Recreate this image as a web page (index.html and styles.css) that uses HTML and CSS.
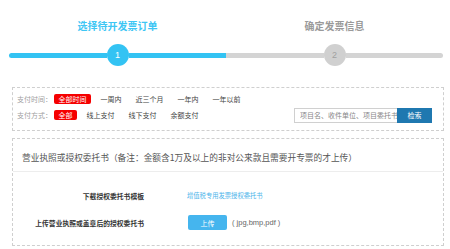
FILE: index.html
```html
<!DOCTYPE html>
<html lang="zh">
<head>
<meta charset="utf-8">
<link rel="stylesheet" href="styles.css">
</head>
<body>
<div class="steps">
  <div class="step step-active">
    <div class="step-title">选择待开发票订单</div>
    <div class="track">
      <span class="line line-left"></span>
      <span class="dot">1</span>
      <span class="line"></span>
    </div>
  </div>
  <div class="step step-todo">
    <div class="step-title">确定发票信息</div>
    <div class="track">
      <span class="line"></span>
      <span class="dot">2</span>
      <span class="line line-right"></span>
    </div>
  </div>
</div>

<div class="filter">
  <div class="frow">
    <span class="flabel">支付时间：</span>
    <span class="opt opt-on">全部时间</span>
    <span class="opt">一周内</span>
    <span class="opt">近三个月</span>
    <span class="opt">一年内</span>
    <span class="opt">一年以前</span>
  </div>
  <div class="frow">
    <span class="flabel">支付方式：</span>
    <span class="opt opt-on">全部</span>
    <span class="opt">线上支付</span>
    <span class="opt">线下支付</span>
    <span class="opt">余额支付</span>
    <div class="search">
      <input class="search-input" type="text" placeholder="项目名、收件单位、项目委托书">
      <span class="search-btn">检索</span>
    </div>
  </div>
</div>

<div class="panel">
  <div class="panel-head">营业执照或授权委托书（备注：金额含1万及以上的非对公来款且需要开专票的才上传）</div>
  <div class="panel-body">
    <div class="prow">
      <span class="plabel">下载授权委托书模板</span>
      <span class="pvalue"><a class="plink">增值税专用发票授权委托书</a></span>
    </div>
    <div class="prow">
      <span class="plabel">上传营业执照或盖章后的授权委托书</span>
      <span class="pvalue"><span class="upload">上传</span><span class="hint">( jpg,bmp,pdf )</span></span>
    </div>
  </div>
</div>
</body>
</html>
```

FILE: styles.css
```css
* { box-sizing: border-box; }
html, body { margin: 0; padding: 0; background: #fff; }
body {
  width: 450px;
  height: 249px;
  overflow: hidden;
  font-family: "Noto Sans CJK SC", "Noto Sans", sans-serif;
  color: #333;
}

.steps {
  display: grid;
  grid-template-columns: 217px 217px;
  padding: 19px 0 0 9px;
}
.step { display: flex; flex-direction: column; align-items: stretch; }
.step-title {
  text-align: center;
  font-size: 10px;
  line-height: 14px;
  height: 14px;
  font-weight: bold;
}
.step-active .step-title { color: #3ec6f4; }
.step-todo .step-title { color: #9a9a9a; }
.track {
  margin-top: 11px;
  display: flex;
  align-items: center;
  height: 22px;
}
.line { flex: 1; height: 5px; }
.line-left { border-radius: 3px 0 0 3px; }
.line-right { border-radius: 0 3px 3px 0; }
.step-active .line { background: #33c3f3; }
.step-todo .line { background: #d4d4d4; }
.dot {
  width: 22px;
  height: 22px;
  border-radius: 50%;
  display: flex;
  align-items: center;
  justify-content: center;
  font-family: "Liberation Sans", sans-serif;
  font-size: 9px;
}
.step-active .dot { background: #33c3f3; color: #fff; }
.step-todo .dot { background: #d0d0d0; color: #a0a0a0; }

.filter {
  margin: 21px 6px 0 12px;
  border: 1px dashed #cfcfcf;
  padding: 3px 11px 6px 4px;
  height: 44px;
}
.frow {
  display: flex;
  align-items: center;
  height: 16px;
  gap: 5px;
  font-size: 7px;
}
.flabel { width: 32px; color: #a0a0a0; white-space: nowrap; }
.opt {
  height: 10px;
  line-height: 10px;
  padding: 0 4.5px;
  border-radius: 2px;
  color: #444;
  white-space: nowrap;
}
.opt-on { background: #f50000; color: #fff; }
.search { margin-left: auto; display: flex; align-items: center; height: 15px; }
.search-input {
  width: 103px;
  height: 15px;
  border: 1px solid #d0d0d0;
  border-right: none;
  padding: 0 0 0 5px;
  margin: 0;
  font-family: "Noto Sans CJK SC", sans-serif;
  font-size: 7px;
  color: #555;
  outline: none;
}
.search-input::placeholder { color: #888; }
.search-btn {
  width: 35px;
  height: 15px;
  background: #1f78b0;
  color: #fff;
  font-size: 7px;
  display: flex;
  align-items: center;
  justify-content: center;
}

.panel {
  margin: 7px 6px 0 12px;
  border: 1px dashed #cfcfcf;
}
.panel-head {
  padding: 12px 9px 7px;
  font-size: 8.7px;
  line-height: 13px;
  color: #555;
  border-bottom: 1px solid #ededed;
  white-space: nowrap;
}
.panel-body {
  padding: 16px 0 15px;
  display: flex;
  flex-direction: column;
  gap: 12px;
}
.prow { display: flex; align-items: center; height: 15px; }
.plabel {
  width: 131px;
  text-align: right;
  font-size: 6.8px;
  font-weight: bold;
  color: #333;
  white-space: nowrap;
}
.pvalue { margin-left: 43px; display: flex; align-items: center; }
.plink { font-size: 6.3px; color: #4cb4ea; }
.upload {
  width: 39px;
  height: 15px;
  margin-left: 1px;
  background: #45b5ee;
  border-radius: 2px;
  color: #fff;
  font-size: 7px;
  display: flex;
  align-items: center;
  justify-content: center;
}
.hint {
  margin-left: 5px;
  font-family: "Liberation Sans", sans-serif;
  font-size: 7.5px;
  color: #666;
}
```
